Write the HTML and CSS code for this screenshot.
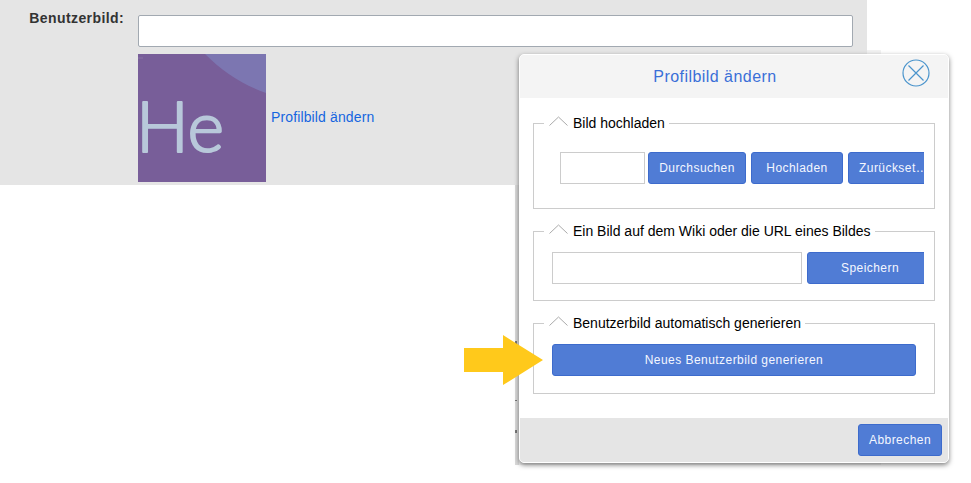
FILE: index.html
```html
<!DOCTYPE html>
<html lang="de">
<head>
<meta charset="utf-8">
<title>Profilbild ändern</title>
<link rel="stylesheet" href="styles.css">
</head>
<body>
<section class="band">
  <div class="label">Benutzerbild:</div>
  <div class="fields">
    <input class="text-input" type="text">
    <div class="avatar-row">
      <svg class="avatar" width="128" height="128" viewBox="0 0 128 128">
        <rect width="128" height="128" fill="#785e99"/>
        <path d="M67 0H128V39C103 30 84 17 67 0Z" fill="#7c76b1"/>
        <rect x="0" y="3" width="5" height="2" fill="#80689f"/>
        <text class="avatar-text" x="-2" y="98" textLength="88">He</text>
      </svg>
      <a class="change-link" href="#">Profilbild ändern</a>
    </div>
  </div>
</section>

<div class="backdrop">
  <span class="speck speck-a"></span>
  <span class="speck speck-b"></span>
  <span class="speck speck-c"></span>
</div>

<div class="modal">
  <header class="modal-head">
    <h2 class="modal-title">Profilbild ändern</h2>
    <svg class="close" width="28" height="28" viewBox="0 0 28 28">
      <circle cx="14" cy="14" r="13" fill="none" stroke="#4a94cc" stroke-width="1.2"/>
      <path d="M6.5 6.5L21.5 21.5M21.5 6.5L6.5 21.5" fill="none" stroke="#4a94cc" stroke-width="1.2"/>
    </svg>
  </header>
  <div class="modal-body">
    <fieldset class="group">
      <legend class="legend"><svg class="chev" width="19" height="10" viewBox="0 0 19 10"><path d="M0.5 9.5L9.5 1L18.5 9.5" fill="none" stroke="#aaa"/></svg>Bild hochladen</legend>
      <div class="row row-upload">
        <input class="plain-input w-file" type="text">
        <button class="btn w-browse">Durchsuchen</button>
        <button class="btn w-upload">Hochladen</button>
        <button class="btn w-reset">Zurücksetzen</button>
      </div>
    </fieldset>
    <fieldset class="group">
      <legend class="legend"><svg class="chev" width="19" height="10" viewBox="0 0 19 10"><path d="M0.5 9.5L9.5 1L18.5 9.5" fill="none" stroke="#aaa"/></svg>Ein Bild auf dem Wiki oder die URL eines Bildes</legend>
      <div class="row row-url">
        <input class="plain-input w-url" type="text">
        <button class="btn w-save">Speichern</button>
      </div>
    </fieldset>
    <fieldset class="group">
      <legend class="legend"><svg class="chev" width="19" height="10" viewBox="0 0 19 10"><path d="M0.5 9.5L9.5 1L18.5 9.5" fill="none" stroke="#aaa"/></svg>Benutzerbild automatisch generieren</legend>
      <div class="row row-gen">
        <button class="btn w-gen">Neues Benutzerbild generieren</button>
      </div>
    </fieldset>
  </div>
  <footer class="modal-foot">
    <button class="btn w-cancel">Abbrechen</button>
  </footer>
</div>

<svg class="arrow" width="79" height="50" viewBox="0 0 79 50">
  <path d="M0 13H39V0L79 25L39 50V37H0Z" fill="#ffc91b"/>
</svg>
</body>
</html>
```

FILE: styles.css
```css
* { box-sizing: border-box; }
html, body { margin: 0; padding: 0; background: #fff; }
body {
  height: 483px;
  overflow: hidden;
  font-family: "Liberation Sans", Arial, sans-serif;
  position: relative;
}

.band {
  position: relative;
  z-index: 1;
  width: 867px;
  height: 185px;
  background: #e5e5e5;
  display: flex;
  padding-top: 15px;
}
.label {
  width: 124px;
  text-align: right;
  font-size: 14px;
  font-weight: bold;
  color: #333;
  letter-spacing: 0.4px;
  line-height: 6px;
}
.fields {
  margin-left: 14px;
  width: 715px;
  display: flex;
  flex-direction: column;
  gap: 7px;
}
.text-input {
  width: 715px;
  height: 32px;
  background: #fff;
  border: 1px solid #a2a9b1;
  border-radius: 2px;
  padding: 0;
}
.avatar-row { display: flex; align-items: center; gap: 5px; }
.avatar { display: block; flex: none; }
.avatar-text {
  font-family: Lato, "Liberation Sans", sans-serif;
  font-weight: 300;
  font-size: 70px;
  fill: #b8c8da;
  stroke: #b8c8da;
  stroke-width: 2.2px;
  stroke-linejoin: round;
  stroke-linecap: round;
  filter: blur(0.4px);
}
.change-link {
  font-size: 14px;
  letter-spacing: 0.13px;
  color: #1565e0;
  text-decoration: none;
  margin-top: -3px;
}

.backdrop {
  position: absolute;
  left: 515px;
  top: 50px;
  width: 366px;
  height: 415px;
  background: #f2f2f2;
  border-left: 4px solid #dadada;
}
.speck {
  position: absolute;
  left: -4px;
  width: 2px;
  background: #777;
}
.speck-a { top: 291px; height: 3px; }
.speck-b { top: 350px; height: 1px; }
.speck-c { top: 380px; height: 3px; }

.modal {
  position: absolute;
  z-index: 2;
  left: 519px;
  top: 54px;
  width: 430px;
  height: 409px;
  background: #fff;
  border: 1px solid #fff;
  border-radius: 5px;
  box-shadow: 0 2px 5px rgba(0, 0, 0, 0.5);
  display: flex;
  flex-direction: column;
  overflow: hidden;
}
.modal-head {
  height: 43px;
  flex: none;
  background: #f4f4f4;
  position: relative;
  display: flex;
  justify-content: center;
  align-items: center;
  padding-right: 38px;
}
.modal-title {
  margin: 0;
  font-size: 16px;
  font-weight: normal;
  color: #3a6fd8;
  letter-spacing: 0.45px;
}
.close {
  position: absolute;
  left: 382px;
  top: 4px;
}
.modal-body {
  flex: 1;
  padding: 15px 13px 0;
  display: flex;
  flex-direction: column;
  gap: 12px;
}
.group {
  margin: 0;
  padding: 0;
  min-width: 0;
  border: 1px solid #ccc;
}
.legend {
  margin-left: 10px;
  padding: 0 4px 0 5px;
  height: 20px;
  font-size: 14px;
  line-height: 20px;
  color: #000;
  display: flex;
  align-items: flex-start;
}
.chev { flex: none; margin: 3px 5px 0 0; }

.row { display: flex; overflow: hidden; margin-right: 10px; }
.row-upload { margin-left: 26px; padding: 19px 0 0; margin-bottom: 24px; gap: 3px; }
.row-url { margin-left: 18px; padding-top: 11px; margin-bottom: 16px; gap: 5px; }
.row-gen { margin-left: 18px; padding-top: 11px; margin-bottom: 17px; }

.plain-input {
  height: 32px;
  background: #fff;
  border: 1px solid #ccc;
  padding: 0;
  flex: none;
}
.btn {
  height: 32px;
  background: #507cd5;
  border: 1px solid #3d6bcc;
  border-radius: 3px;
  color: #f4f7ff;
  font-family: "Liberation Sans", Arial, sans-serif;
  font-size: 12px;
  letter-spacing: 0.45px;
  padding: 0;
  flex: none;
}
.w-file { width: 85px; }
.w-browse { width: 98px; }
.w-upload { width: 92px; margin-left: 2px; }
.w-reset {
  width: 82px;
  margin-left: 2px;
  padding-left: 10px;
  text-align: left;
  overflow: hidden;
  white-space: nowrap;
  text-overflow: ellipsis;
}
.w-url { width: 250px; }
.w-save { width: 126px; }
.w-gen { width: 364px; }

.modal-foot {
  height: 44px;
  flex: none;
  background: #e5e5e5;
  display: flex;
  justify-content: flex-end;
  padding: 6px 6px 0 0;
}
.w-cancel { width: 84px; }

.arrow {
  position: absolute;
  z-index: 3;
  left: 464px;
  top: 335px;
}
```
